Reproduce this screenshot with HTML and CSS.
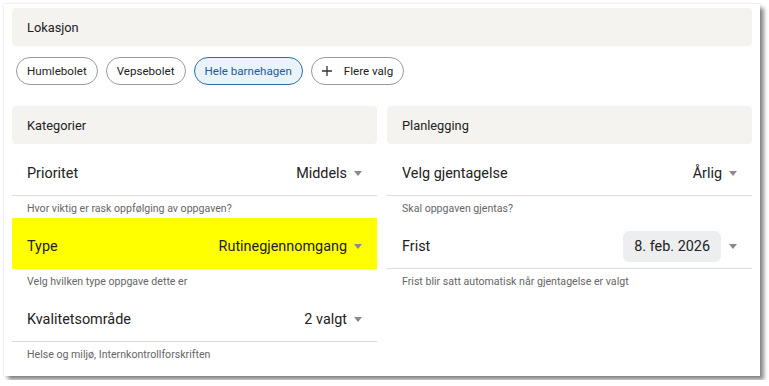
FILE: index.html
```html
<!DOCTYPE html>
<html lang="no">
<head>
    <meta charset="UTF-8">
    <meta name="viewport" content="width=device-width, initial-scale=1.0">
    <title>Oppgave</title>
    <link rel="stylesheet" href="styles.css">
</head>
<body>
<div class="card">
    <div class="section-head">Lokasjon</div>
    <div class="chips">
        <button class="chip">Humlebolet</button>
        <button class="chip">Vepsebolet</button>
        <button class="chip chip-active">Hele barnehagen</button>
        <button class="chip chip-more">
            <svg class="plus" width="10" height="10" viewBox="0 0 10 10"><path d="M5 0v10M0 5h10" stroke="#333" stroke-width="1.3"/></svg>
            Flere valg
        </button>
    </div>

    <div class="columns">
        <div class="column">
            <div class="section-head">Kategorier</div>
            <div class="field">
                <span class="label">Prioritet</span>
                <span class="value">Middels <span class="caret"></span></span>
            </div>
            <div class="hint">Hvor viktig er rask oppfølging av oppgaven?</div>
            <div class="field field-marked">
                <span class="label">Type</span>
                <span class="value">Rutinegjennomgang <span class="caret"></span></span>
            </div>
            <div class="hint">Velg hvilken type oppgave dette er</div>
            <div class="field">
                <span class="label">Kvalitetsområde</span>
                <span class="value">2 valgt <span class="caret"></span></span>
            </div>
            <div class="hint">Helse og miljø, Internkontrollforskriften</div>
        </div>

        <div class="column">
            <div class="section-head">Planlegging</div>
            <div class="field">
                <span class="label">Velg gjentagelse</span>
                <span class="value">Årlig <span class="caret"></span></span>
            </div>
            <div class="hint">Skal oppgaven gjentas?</div>
            <div class="field">
                <span class="label">Frist</span>
                <span class="value"><span class="date">8. feb. 2026</span> <span class="caret"></span></span>
            </div>
            <div class="hint">Frist blir satt automatisk når gjentagelse er valgt</div>
        </div>
    </div>
</div>
</body>
</html>
```

FILE: styles.css
```css
body {
    margin: 0;
    padding: 4px;
    font-family: Roboto, "Noto Sans", Arial, sans-serif;
    color: #222;
    background: #fff;
}

.card {
    width: 740px;
    height: 360px;
    padding: 4px 8px 8px 8px;
    background: #fff;
    box-shadow: 0 0 2px rgba(0, 0, 0, 0.18), 4px 4px 4px rgba(0, 0, 0, 0.45);
}

.section-head {
    height: 38px;
    display: flex;
    align-items: center;
    padding-left: 15px;
    background: #f4f3f0;
    border-radius: 4px;
    font-size: 12.8px;
}

.chips {
    display: flex;
    gap: 8px;
    padding: 11px 4px 0 4px;
    height: 28px;
}

.chip {
    height: 28px;
    padding: 0 10px;
    border: 1px solid #9a9a9a;
    border-radius: 14px;
    background: #fff;
    font-family: inherit;
    font-size: 11.6px;
    color: #222;
}

.chip-active {
    background: #eaf2fa;
    border-color: #2a6ea8;
    color: #1b5f99;
}

.chip-more {
    display: flex;
    align-items: center;
    padding-left: 10px;
}

.plus {
    margin-right: 12px;
}

.columns {
    display: flex;
    gap: 10px;
    margin-top: 21px;
}

.column {
    flex: 1;
}

.column .section-head {
    margin-bottom: 1px;
}

.field {
    height: 43px;
    padding: 7px 15px 0 15px;
    display: flex;
    align-items: center;
    justify-content: space-between;
    border-bottom: 1px solid #dcdcdc;
    font-size: 14.4px;
}

.field-marked {
    background: #ffff00;
    border-bottom-color: #ffff00;
}

.value {
    display: flex;
    align-items: center;
}

.caret {
    width: 0;
    height: 0;
    margin-left: 7px;
    border-left: 4.5px solid transparent;
    border-right: 4.5px solid transparent;
    border-top: 5px solid #8a8a8a;
}

.date {
    background: #eceef0;
    border-radius: 6px;
    padding: 7px 11px;
    margin-right: 1px;
}

.hint {
    height: 20px;
    padding-top: 2px;
    padding-left: 15px;
    font-size: 10.6px;
    color: #666;
    display: flex;
    align-items: center;
}
```
